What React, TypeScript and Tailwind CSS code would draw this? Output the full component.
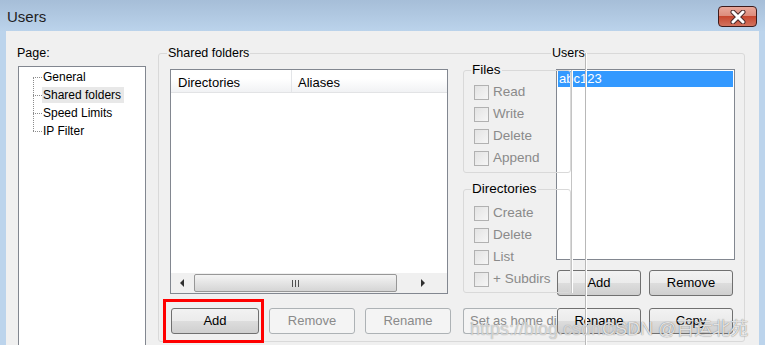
import React from "react";

const font = { fontFamily: '"Liberation Sans", Arial, sans-serif' };

function Button({ label, width, disabled, className = "" }: { label: string; width: string; disabled?: boolean; className?: string }) {
  return (
    <div
      className={`${width} ${className} h-[26px] shrink-0 rounded-[3px] border flex items-center justify-center text-[13px] ${
        disabled
          ? "border-[#adb2b5] bg-[#f4f4f4] text-[#8a8a8a]"
          : "border-[#707070] bg-[linear-gradient(#f2f2f2,#ebebeb_50%,#dddddd_50%,#cfcfcf)] text-black"
      }`}
    >
      {label}
    </div>
  );
}

function Check({ label }: { label: string }) {
  return (
    <div className="h-[22px] flex items-center gap-[4px]">
      <div className="w-[15px] h-[15px] border border-[#b1b1b1] bg-linear-to-br from-[#e3e3e3] to-[#f6f6f6]" />
      <span className="text-[13.5px] text-[#8a8a8a]">{label}</span>
    </div>
  );
}

function Group({ title, height, pt, items, className = "" }: { title: string; height: string; pt: string; items: string[]; className?: string }) {
  return (
    <div className={`relative w-[108px] shrink-0 ${height} ${pt} pl-[10px] rounded-[3px] border border-[#d9d9d9] ${className}`}>
      <span className="absolute -top-[9px] left-[7px] bg-[#f0f0f0] px-px text-[13.5px] leading-[16px] text-black">{title}</span>
      {items.map((i) => (
        <Check key={i} label={i} />
      ))}
    </div>
  );
}

const pages = ["General", "Shared folders", "Speed Limits", "IP Filter"];

export default function App() {
  return (
    <div className="w-[765px] h-[345px] overflow-hidden bg-[#bcd4ec] flex flex-col" style={font}>
      {/* title bar */}
      <div className="h-[31px] shrink-0 flex items-start justify-between pl-[7px] pr-[8px] bg-linear-to-b from-[#a6bed8] to-[#bbd3eb]">
        <span className="mt-[7px] text-[15px] leading-[20px] text-[#1e1e1e]">Users</span>
        <div className="mt-[6px] w-[39px] h-[21px] rounded-[4px] border border-[#3d1c1c] bg-[linear-gradient(#e9a89a,#dc8a7a_50%,#c7472f_50%,#d2735f)] flex items-center justify-center">
          <svg width="16" height="14" viewBox="0 0 16 14">
            <path d="M3 2 L13 12 M13 2 L3 12" stroke="#4a2a2a" strokeWidth="5" strokeLinecap="round" />
            <path d="M3 2 L13 12 M13 2 L3 12" stroke="#ffffff" strokeWidth="3" strokeLinecap="round" />
          </svg>
        </div>
      </div>

      {/* body */}
      <div className="relative mx-[6px] flex-1 bg-[#f0f0f0] flex">
        {/* page tree */}
        <div className="ml-[12px] w-[128px] shrink-0 pt-[13px]">
          <div className="-ml-px text-[12.5px] leading-[18px] text-black">Page:</div>
          <div className="mt-[4px] h-[300px] border border-[#828790] bg-white pt-px">
            <div className="relative">
              <div className="absolute left-[14px] top-[9px] h-[54px] border-l border-dotted border-[#8c8c8c]" />
              {pages.map((p) => (
                <div key={p} className="h-[18px] flex items-center">
                  <span className="ml-[14px] w-[9px] border-t border-dotted border-[#8c8c8c]" />
                  <span
                    className={`px-px text-[12px] leading-[16px] text-black ${p === "Shared folders" ? "bg-[#e8e8e8] pr-[3px]" : ""}`}
                  >
                    {p}
                  </span>
                </div>
              ))}
            </div>
          </div>
        </div>

        {/* shared folders group */}
        <div className="relative ml-[12px] mt-[22px] w-[587px] h-[289px] shrink-0 rounded-[3px] border border-[#d9d9d9] pt-[15px] pl-[11px]">
          <span className="absolute -top-[9px] left-[8px] bg-[#f0f0f0] px-px text-[12.5px] leading-[16px] text-black">Shared folders</span>
          <span className="absolute -top-[9px] left-[392px] bg-[#f0f0f0] px-px text-[12.5px] leading-[16px] text-black">Users</span>

          <div className="flex items-start">
            {/* directories list */}
            <div className="w-[278px] h-[225px] shrink-0 border border-[#828790] bg-white flex flex-col">
              <div className="h-[23px] pt-[3px] flex border-b border-[#e2e3e5] bg-linear-to-b from-white from-40% to-[#f1f2f4] text-[13px] leading-[19px] text-black">
                <div className="w-[121px] -mt-[3px] pt-[3px] border-r border-[#e3e5e8] px-[7px]">Directories</div>
                <div className="flex-1 px-[6px]">Aliases</div>
              </div>
              <div className="flex-1" />
              <div className="h-[20px] bg-[#f0f0f0] flex items-center">
                <div className="w-[23px] flex justify-center">
                  <svg width="5" height="8" viewBox="0 0 5 8"><path d="M4 0 L0 4 L4 8 Z" fill="#303030" /></svg>
                </div>
                <div className="w-[203px] h-[18px] rounded-[2px] border border-[#979797] bg-linear-to-b from-[#f4f4f4] to-[#d5d5d5] flex items-center justify-center gap-[2px]">
                  <span className="w-px h-[7px] bg-[#505050]" />
                  <span className="w-px h-[7px] bg-[#505050]" />
                  <span className="w-px h-[7px] bg-[#505050]" />
                </div>
                <div className="flex-1 flex justify-center">
                  <svg width="5" height="8" viewBox="0 0 5 8"><path d="M1 0 L5 4 L1 8 Z" fill="#303030" /></svg>
                </div>
              </div>
            </div>

            {/* permissions */}
            <div className="ml-[15px] w-[93px] shrink-0 flex flex-col">
              <Group title="Files" height="h-[103px]" pt="pt-[10px]" className="mt-px" items={["Read", "Write", "Delete", "Append"]} />
              <Group title="Directories" height="h-[104px]" pt="pt-[12px]" className="mt-[16px]" items={["Create", "Delete", "List", "+ Subdirs"]} />
            </div>

            {/* users */}
            <div className="w-[179px] shrink-0">
              <div className="h-[191px] border border-[#828790] bg-white p-px">
                <div className="h-[16px] bg-[#3399ff] pl-px text-[13px] leading-[16px] text-white">abc123</div>
              </div>
              <div className="mt-[10px] flex">
                <Button label="Add" width="w-[84px]" className="ml-px" />
                <Button label="Remove" width="w-[84px]" className="ml-[8px]" />
              </div>
            </div>
          </div>

          <div className="mt-[12px] flex">
            <Button label="Add" width="w-[88px]" className="ml-px" />
            <Button label="Remove" width="w-[86px]" className="ml-[10px]" disabled />
            <Button label="Rename" width="w-[86px]" className="ml-[10px]" disabled />
            <div className="ml-[12px] w-[94px] h-[26px] shrink-0 overflow-hidden whitespace-nowrap rounded-l-[3px] border border-r-0 border-[#adb2b5] bg-[#f4f4f4] pl-[6px] text-[13px] leading-[24px] text-[#8a8a8a]">
              Set as home dir
            </div>
            <Button label="Rename" width="w-[84px]" />
            <Button label="Copy" width="w-[84px]" className="ml-[8px]" />
          </div>

          {/* highlight around Add */}
          <div className="absolute left-[4px] top-[245px] w-[101px] h-[44px] border-[3px] border-[#ff0000]" />
        </div>

        {/* stray redraw lines */}
        <div className="absolute left-[565px] top-[39px] w-[2px] h-[223px] border-l border-[#c4c4c4] border-r border-r-white" />
        <div className="absolute left-[579px] top-[22px] w-[2px] h-[300px] border-l border-[#b8b8b8] border-r border-r-white" />

        {/* watermark */}
        <div className="absolute left-[464px] top-[287px] whitespace-nowrap text-[18px] leading-[22px] text-white/60 [text-shadow:0_0_1px_#888]">
          https://blog.csdn.net/
        </div>
        <div
          className="absolute left-[596px] top-[287px] whitespace-nowrap text-[18px] leading-[22px] text-white/80 [text-shadow:0_0_1px_#555]"
          style={{ fontFamily: '"Liberation Sans", "Noto Sans CJK SC", sans-serif' }}
        >
          CSDN @百运北苑
        </div>
      </div>
    </div>
  );
}
